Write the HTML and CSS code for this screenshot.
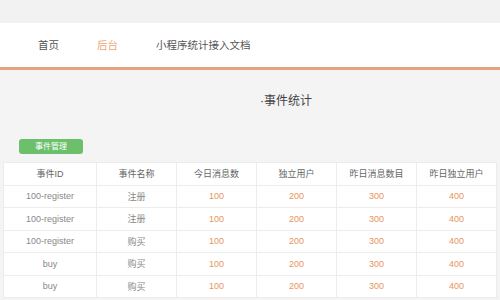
FILE: index.html
```html
<!DOCTYPE html>
<html lang="zh">
<head>
    <meta charset="UTF-8">
    <title>事件统计</title>
    <link rel="stylesheet" href="styles.css">
</head>
<body>
    <div class="top"></div>
    <div class="nav">
        <ul>
            <li><a href="#">首页</a></li>
            <li><a href="#" class="current">后台</a></li>
            <li><a href="#">小程序统计接入文档</a></li>
        </ul>
    </div>

    <div class="main">
        <h2 class="title">·事件统计</h2>

        <a href="#" class="btn">事件管理</a>

        <table class="list">
            <tr>
                <th class="c1">事件ID</th>
                <th>事件名称</th>
                <th>今日消息数</th>
                <th>独立用户</th>
                <th>昨日消息数目</th>
                <th>昨日独立用户</th>
            </tr>
            <tr>
                <td class="c1">100-register</td>
                <td>注册</td>
                <td class="num">100</td>
                <td class="num">200</td>
                <td class="num">300</td>
                <td class="num">400</td>
            </tr>
            <tr>
                <td class="c1">100-register</td>
                <td>注册</td>
                <td class="num">100</td>
                <td class="num">200</td>
                <td class="num">300</td>
                <td class="num">400</td>
            </tr>
            <tr>
                <td class="c1">100-register</td>
                <td>购买</td>
                <td class="num">100</td>
                <td class="num">200</td>
                <td class="num">300</td>
                <td class="num">400</td>
            </tr>
            <tr>
                <td class="c1">buy</td>
                <td>购买</td>
                <td class="num">100</td>
                <td class="num">200</td>
                <td class="num">300</td>
                <td class="num">400</td>
            </tr>
            <tr>
                <td class="c1">buy</td>
                <td>购买</td>
                <td class="num">100</td>
                <td class="num">200</td>
                <td class="num">300</td>
                <td class="num">400</td>
            </tr>
        </table>
    </div>
</body>
</html>
```

FILE: styles.css
```css
* {
    margin: 0;
    padding: 0;
}

li {
    list-style: none;
}

a {
    text-decoration: none;
}

body {
    background-color: #f4f4f5;
    font-family: "Liberation Sans", "Noto Sans CJK SC", sans-serif;
    color: #555;
    overflow: hidden;
}

.top {
    height: 23px;
    background-color: #f2f2f2;
}

.nav {
    height: 44px;
    background-color: #fff;
    border-bottom: 3px solid #e3a47d;
}

.nav ul {
    display: flex;
    padding-left: 38px;
    gap: 38px;
}

.nav li a {
    display: block;
    line-height: 44px;
    font-size: 10.5px;
    color: #555;
}

.nav li a.current {
    color: #f0a477;
}

.main {
    padding: 0 3px;
}

.title {
    margin-top: 21px;
    padding-left: 257px;
    font-size: 12px;
    line-height: 20px;
    font-weight: normal;
    color: #444;
}

.btn {
    display: block;
    width: 64px;
    height: 15px;
    margin: 28px 0 0 16px;
    line-height: 15px;
    text-align: center;
    font-size: 8px;
    color: #fff;
    background-color: #6cbf6b;
    border-radius: 3px;
}

.list {
    width: 494px;
    margin-top: 8px;
    border-collapse: collapse;
    background-color: #fff;
    table-layout: fixed;
}

.list th,
.list td {
    height: 21.5px;
    padding: 0;
    border: 1px solid #ececec;
    text-align: center;
    font-size: 9px;
    font-weight: normal;
    color: #666;
}

.list td {
    color: #888;
}

.list .c1 {
    width: 92px;
}

.list td.num {
    color: #e8945f;
}
```
